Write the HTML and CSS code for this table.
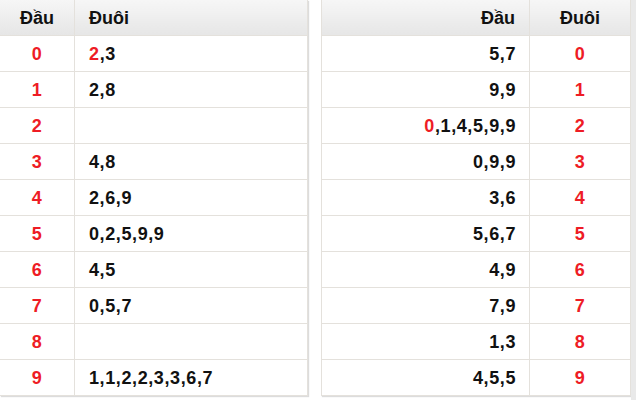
FILE: index.html
```html
<!DOCTYPE html>
<html>
<head>
<meta charset="utf-8">
<link rel="stylesheet" href="styles.css">
</head>
<body>
<div class="page">
  <table class="tbl tbl-left">
    <thead>
      <tr><th class="c-head">Đầu</th><th class="c-tail">Đuôi</th></tr>
    </thead>
    <tbody>
      <tr><td class="c-head red">0</td><td class="c-tail"><span class="red">2</span>,3</td></tr>
      <tr><td class="c-head red">1</td><td class="c-tail">2,8</td></tr>
      <tr><td class="c-head red">2</td><td class="c-tail"></td></tr>
      <tr><td class="c-head red">3</td><td class="c-tail">4,8</td></tr>
      <tr><td class="c-head red">4</td><td class="c-tail">2,6,9</td></tr>
      <tr><td class="c-head red">5</td><td class="c-tail">0,2,5,9,9</td></tr>
      <tr><td class="c-head red">6</td><td class="c-tail">4,5</td></tr>
      <tr><td class="c-head red">7</td><td class="c-tail">0,5,7</td></tr>
      <tr><td class="c-head red">8</td><td class="c-tail"></td></tr>
      <tr><td class="c-head red">9</td><td class="c-tail">1,1,2,2,3,3,6,7</td></tr>
    </tbody>
  </table>
  <table class="tbl tbl-right">
    <thead>
      <tr><th class="r-list">Đầu</th><th class="r-num">Đuôi</th></tr>
    </thead>
    <tbody>
      <tr><td class="r-list">5,7</td><td class="r-num red">0</td></tr>
      <tr><td class="r-list">9,9</td><td class="r-num red">1</td></tr>
      <tr><td class="r-list"><span class="red">0</span>,1,4,5,9,9</td><td class="r-num red">2</td></tr>
      <tr><td class="r-list">0,9,9</td><td class="r-num red">3</td></tr>
      <tr><td class="r-list">3,6</td><td class="r-num red">4</td></tr>
      <tr><td class="r-list">5,6,7</td><td class="r-num red">5</td></tr>
      <tr><td class="r-list">4,9</td><td class="r-num red">6</td></tr>
      <tr><td class="r-list">7,9</td><td class="r-num red">7</td></tr>
      <tr><td class="r-list">1,3</td><td class="r-num red">8</td></tr>
      <tr><td class="r-list">4,5,5</td><td class="r-num red">9</td></tr>
    </tbody>
  </table>
  <div class="edge"></div>
</div>
</body>
</html>
```

FILE: styles.css
```css
html, body {
  margin: 0;
  padding: 0;
  background: #ffffff;
}
.page {
  display: flex;
  align-items: flex-start;
  width: 636px;
  height: 400px;
  font-family: "Liberation Sans", Arial, sans-serif;
}
.tbl {
  border-collapse: collapse;
  table-layout: fixed;
  box-shadow: 1px 1px 1px #dcdcdc;
}
.tbl-left {
  width: 308px;
}
.tbl-right {
  width: 310px;
  margin-left: 13px;
}
.edge {
  flex: 1;
  align-self: stretch;
  background: #e9e9e9;
}
.tbl th, .tbl td {
  height: 34px;
  padding: 1px 14px 0;
  border: 1px solid #e4e1dc;
  font-size: 18px;
  font-weight: bold;
  color: #111;
  white-space: nowrap;
}
.tbl td {
  letter-spacing: 0.6px;
}
.tbl th {
  background: linear-gradient(#f6f6f6, #e6e6e6);
  border-top: none;
}
.tbl-left th:first-child, .tbl-left td:first-child {
  border-left: none;
}
.tbl-left .c-head { width: 46px; text-align: center; }
.tbl-left .c-tail { text-align: left; }
.tbl-right .r-list { text-align: right; padding-right: 13px; }
.tbl-right th.r-list { padding-right: 14px; }
.tbl-right .r-num { width: 72px; text-align: center; }
.tbl .red { color: #ee1c25; }
```
